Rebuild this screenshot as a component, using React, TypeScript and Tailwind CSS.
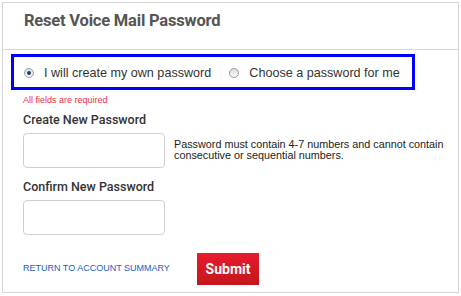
import { useState } from "react"

export default function App() {
  const [mode, setMode] = useState<"own" | "auto">("own")

  return (
    <div className="w-[461px] h-[296px] bg-white p-[2px] font-['Liberation_Sans',Arial,sans-serif]">
      <div className="w-[457px] h-[291px] border border-[#d6d6d6] flex flex-col">
        {/* header */}
        <div className="h-[47px] border-b border-[#d6d6d6] pl-[21px] pt-[6px]">
          <h1 className="font-['Roboto',sans-serif] font-bold text-[16.5px] text-[#555] tracking-[-0.2px]">
            Reset Voice Mail Password
          </h1>
        </div>

        <div className="px-[8px] pt-[4px]">
          <div className="w-[404px] h-[36px] border-[3px] border-[#0000ff] flex items-center pl-[10px] pt-[2px] text-[12.6px] text-[#333] whitespace-nowrap">
            <Radio checked={mode === "own"} onClick={() => setMode("own")} label="I will create my own password" />
            <div className="w-[18px]" />
            <Radio checked={mode === "auto"} onClick={() => setMode("auto")} label="Choose a password for me" />
          </div>
        </div>

        <div className="pl-[20px]">
          <p className="text-[9px] text-[#e8304a] mt-[4px] leading-[12px]">All fields are required</p>

          <label className="block mt-[6px] font-['Roboto',sans-serif] font-medium text-[12.5px] text-[#333] leading-[16px]">
            Create New Password
          </label>
          <div className="flex mt-[5px]">
            <input type="password" className="w-[142px] h-[35px] border border-[#cfcfcf] rounded-[4px] outline-none" />
            <p className="ml-[9px] mt-[6px] text-[10.8px] leading-[11px] text-[#222]">
              Password must contain 4-7 numbers and cannot contain
              <br />
              consecutive or sequential numbers.
            </p>
          </div>

          <label className="block mt-[11px] font-['Roboto',sans-serif] font-medium text-[12.5px] text-[#333] leading-[16px]">
            Confirm New Password
          </label>
          <input type="password" className="block mt-[5px] w-[142px] h-[35px] border border-[#cfcfcf] rounded-[4px] outline-none" />

          <div className="flex items-center mt-[18px]">
            <a href="#" className="text-[9px] text-[#2160c8] tracking-[0px] w-[174px]">
              RETURN TO ACCOUNT SUMMARY
            </a>
            <button className="w-[62px] h-[32px] bg-gradient-to-b from-[#e81c2c] to-[#c4161c] text-white font-bold text-[14px] font-['Roboto',sans-serif]">
              Submit
            </button>
          </div>
        </div>
      </div>
    </div>
  )
}

function Radio({ checked, onClick, label }: { checked: boolean; onClick: () => void; label: string }) {
  return (
    <label className="flex items-center cursor-pointer" onClick={onClick}>
      <span className="w-[10px] h-[10px] rounded-full border border-[#9a9a9a] bg-gradient-to-b from-[#e0e0e0] to-[#f8f8f8] flex items-center justify-center">
        {checked && <span className="w-[4px] h-[4px] rounded-full bg-[#1f3f6e]" />}
      </span>
      <span className="ml-[10px]">{label}</span>
    </label>
  )
}
